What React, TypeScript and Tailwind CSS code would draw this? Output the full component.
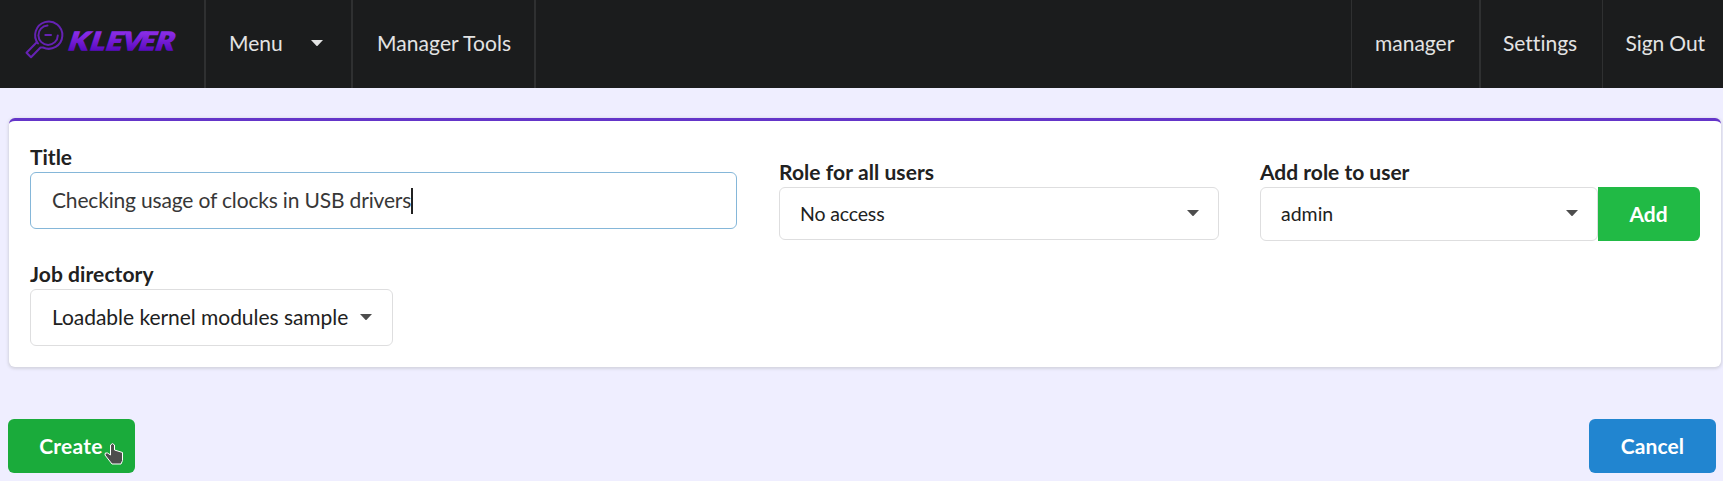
import type { ReactNode } from "react";

function Caret({ className = "" }: { className?: string }) {
  return (
    <svg className={className} width="12" height="6" viewBox="0 0 12 6" fill="currentColor">
      <path d="M0 0H12L6.6 5.7Q6 6.2 5.4 5.7Z" />
    </svg>
  );
}

function Logo() {
  return (
    <svg width="204" height="88" viewBox="0 0 204 88" fill="none">
      <defs>
        <linearGradient id="klever" gradientUnits="userSpaceOnUse" x1="0" y1="-18" x2="0" y2="0">
          <stop offset="0.1" stopColor="#882be4" />
          <stop offset="1" stopColor="#5b0bc2" />
        </linearGradient>
      </defs>
      <g stroke="#6522b3" strokeWidth="2" strokeLinejoin="round" strokeLinecap="round">
        <path d="M38 43.5A13.6 13.6 0 1 1 43 47.5L40.5 47.5L31 57.3L26.5 52.8L36.5 42.5V41" />
        <path d="M47.5 25.5A9.7 9.7 0 1 0 57.8 35.5" />
        <path d="M45.3 35H51" />
      </g>
      <g transform="translate(68 50) skewX(-10) scale(1.2 1)">
        <text x="0 18.2 31.3 44.5 58.7 72.5" y="0" fill="url(#klever)" stroke="url(#klever)" strokeWidth="1.3" className="font-['Lato',sans-serif] text-[25px] font-black italic">KLEVER</text>
      </g>
    </svg>
  );
}

function NavItem({ children, className }: { children: ReactNode; className: string }) {
  return <a className={`flex h-full items-center whitespace-nowrap border-[#2f3031] pb-0.5 ${className}`}>{children}</a>;
}

export default function App() {
  return (
    <div className="h-[481px] w-full overflow-hidden bg-[#efeeff] font-['Lato',sans-serif] text-[21px] leading-[30px] text-[#212121] [font-variant-ligatures:none]">
      <nav className="flex h-[88px] bg-[#1b1c1d] text-[#e3e3e3]">
        <a className="flex w-[206px] border-r-2 border-[#2f3031]"><Logo /></a>
        <NavItem className="w-[147px] border-r-2 pl-[23px]">
          Menu
          <Caret className="ml-[28px]" />
        </NavItem>
        <NavItem className="w-[183px] border-r-2 pl-6 tracking-[0.07px]">Manager Tools</NavItem>
        <div className="ml-auto flex">
          <NavItem className="w-[128px] border-l pl-[23px]">manager</NavItem>
          <NavItem className="w-[123px] border-l-2 pl-[22px]">Settings</NavItem>
          <NavItem className="w-[121px] border-l pl-[22.5px] tracking-[-0.1px]">Sign Out</NavItem>
        </div>
      </nav>

      <main className="pt-[30px]">
        <section className="ml-[9px] mr-[2px] flex h-[249px] items-start rounded-md border-t-[3px] border-[#6435c9] bg-white pl-[21px] shadow-[0_1px_3px_1px_#d4d4e0]">
          <div className="w-[707px] pt-[21px]">
            <label className="block font-bold">Title</label>
            <div className="flex h-[57px] items-center rounded-md border border-[#85b7d9] pb-0.5 pl-[21px] tracking-[-0.17px] text-[#373737]">
              Checking usage of clocks in USB drivers
              <span className="mb-[-2px] h-[26px] w-[2px] bg-[#212121]" />
            </div>
            <label className="mt-[30px] block font-bold tracking-[0.08px]">Job directory</label>
            <div className="flex h-[57px] w-[363px] items-center rounded-md border border-[#dededf] pb-0.5 pl-[21px] tracking-[-0.04px]">
              Loadable kernel modules sample
              <Caret className="ml-[12px] text-[#4d4d4d]" />
            </div>
          </div>
          <div className="ml-[42px] w-[440px] pt-9">
            <label className="block font-bold tracking-[0.08px]">Role for all users</label>
            <div className="flex h-[53px] items-center justify-between rounded-md border border-[#dededf] pl-5 pr-[19px] text-[19.5px] tracking-[-0.15px]">
              No access
              <Caret className="mb-0.5 text-[#4d4d4d]" />
            </div>
          </div>
          <div className="ml-[41px] w-[440px] pt-9">
            <label className="block font-bold">Add role to user</label>
            <div className="flex h-[54px]">
              <div className="flex w-[338px] items-center justify-between rounded-md border border-[#dededf] pb-px pl-5 pr-[19px] text-[19.5px]">
                admin
                <Caret className="mb-px text-[#4d4d4d]" />
              </div>
              <button className="w-[102px] rounded-r-md bg-[#21ba45] pr-px font-bold text-white">Add</button>
            </div>
          </div>
        </section>

        <div className="mt-[52px] flex justify-between pl-2 pr-[7px]">
          <button className="relative h-[54px] w-[127px] rounded-md bg-[#1aab3b] pr-px font-bold tracking-[0.25px] text-white">
            Create
            <svg className="absolute left-[95px] top-[23px]" width="22" height="24" viewBox="0 0 22 24">
              <path d="M7.5 3Q9.5.2 11.5 3V8L19.5 10.5V18.5L18 22H9L2 13Q1.5 10 4.5 11L7.5 13Z" fill="#4d4d4d" stroke="white" strokeWidth="1" />
            </svg>
          </button>
          <button className="h-[54px] w-[127px] rounded-md bg-[#2185d0] font-bold tracking-[0.1px] text-white">Cancel</button>
        </div>
      </main>
    </div>
  );
}
